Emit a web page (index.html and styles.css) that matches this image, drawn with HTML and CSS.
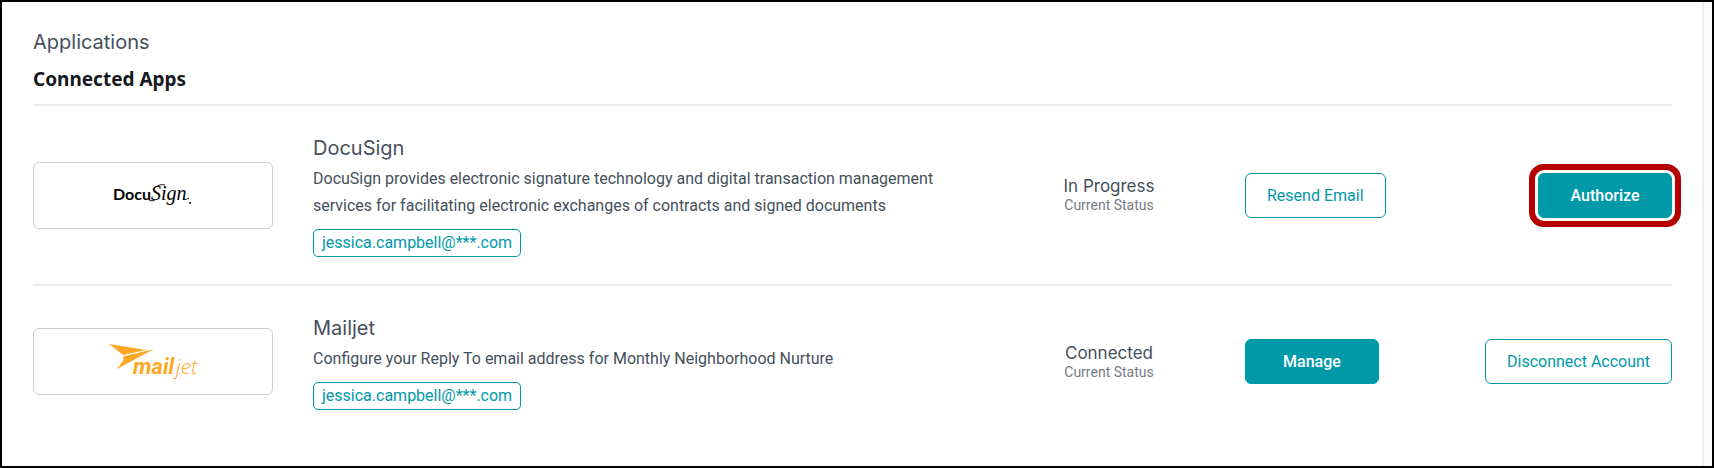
FILE: index.html
```html
<!DOCTYPE html>
<html lang="en">
<head>
	<title>Applications</title>
	<meta charset="UTF-8">
	<link rel="stylesheet" href="styles.css">
</head>
<body>
	<div id="page">
		<div id="apps">
			<h1>Applications</h1>
			<h2>Connected Apps</h2>
			<ul id="app-list">
				<li>
					<div class="logo">
						<svg width="80" height="30" viewBox="0 0 80 30">
							<text class="docu" x="0" y="20">Docu</text>
							<text class="sign" x="38" y="20">Sign</text>
							<path class="swash" d="M40 10c3-5 9-6 12-5"/>
							<path class="swash" d="M36 20c2 1 4 1 6 0M71 19c2 1 3 0 5-1"/>
							<circle cx="77" cy="23" r="1"/>
						</svg>
					</div>
					<div class="info">
						<h3>DocuSign</h3>
						<p>DocuSign provides electronic signature technology and digital transaction management services for facilitating electronic exchanges of contracts and signed documents</p>
						<span class="tag">jessica.campbell@***.com</span>
					</div>
					<div class="status">
						<strong>In Progress</strong>
						<small>Current Status</small>
					</div>
					<div class="action">
						<button type="button" class="btn">Resend Email</button>
					</div>
					<div class="action last">
						<button type="button" class="btn fill marked">Authorize</button>
					</div>
				</li>
				<li>
					<div class="logo">
						<svg width="94" height="40" viewBox="0 0 94 40">
							<g fill="#ffa724">
								<path d="M3 2L40 8L17 13Z"/>
								<path d="M17 14.5L48 7L11 27L17.5 18Z"/>
								<text class="mail" x="27" y="32">mail</text>
								<text class="jet" x="70" y="32">jet</text>
							</g>
						</svg>
					</div>
					<div class="info">
						<h3>Mailjet</h3>
						<p>Configure your Reply To email address for Monthly Neighborhood Nurture</p>
						<span class="tag">jessica.campbell@***.com</span>
					</div>
					<div class="status">
						<strong>Connected</strong>
						<small>Current Status</small>
					</div>
					<div class="action">
						<button type="button" class="btn fill">Manage</button>
					</div>
					<div class="action last">
						<button type="button" class="btn">Disconnect Account</button>
					</div>
				</li>
			</ul>
		</div>
	</div>
</body>
</html>
```
FILE: styles.css
```css
*{
	margin: 0;
	padding: 0;
	box-sizing: border-box;
}
ul{
	list-style: none;
}
body{
	font-family: Roboto, "Liberation Sans", sans-serif;
	font-size: 16px;
	color: #454f5b;
	background: #fff;
}
#page{
	min-height: 100vh;
	border: 2px solid #000;
	padding-right: 8px;
	background: #fafafa;
	display: flex;
}
#apps{
	flex: 1;
	padding: 23px 30px 24px 31px;
	background: #fff;
	border-right: 2px solid #eee;
}
h1, h3{
	font-family: Inter, "Liberation Sans", sans-serif;
	font-size: 20px;
	font-weight: 400;
	line-height: 34px;
}
h2{
	font-family: "Noto Sans", sans-serif;
	font-size: 19px;
	font-weight: 700;
	line-height: 41px;
	margin-bottom: 4px;
	color: #16191d;
}
#app-list{
	border-top: 2px solid #ececec;
}
#app-list li{
	display: grid;
	grid-template-columns: 240px 1fr 192px 200px 187px;
	gap: 40px;
	align-items: center;
	padding: 24px 0;
	border-bottom: 2px solid #ececec;
}
#app-list li:last-child{
	border-bottom: none;
}
.logo{
	height: 67px;
	border: 1px solid #c9ced3;
	border-radius: 6px;
	display: flex;
	align-items: center;
	justify-content: center;
}
.docu{
	font: 700 16px Lato, sans-serif;
}
.sign{
	font: italic 20px "Liberation Serif", serif;
}
.swash{
	fill: none;
	stroke: #111;
}
.mail{
	font: italic 700 22px Roboto, sans-serif;
}
.jet{
	font: italic 300 21px "Open Sans", sans-serif;
}
.info{
	padding: 1px 0 3px;
}
.info p{
	line-height: 27px;
	margin-bottom: 10px;
}
.tag{
	display: block;
	width: max-content;
	border: 1px solid #0099a8;
	border-radius: 5px;
	padding: 0 8px;
	line-height: 26px;
	color: #0099a8;
}
.status{
	text-align: center;
}
.status strong{
	display: block;
	font-family: Inter, "Liberation Sans", sans-serif;
	font-size: 17px;
	font-weight: 400;
	line-height: 20px;
}
.status small{
	display: block;
	font-size: 14px;
	line-height: 18px;
	color: #747c86;
}
.last{
	text-align: right;
}
.btn{
	min-width: 134px;
	height: 45px;
	padding: 0 21px;
	border: 1px solid #0099a8;
	border-radius: 6px;
	background: #fff;
	color: #0099a8;
	font: inherit;
	white-space: nowrap;
	cursor: pointer;
}
.fill{
	background: #0099a8;
	color: #fff;
	font-weight: 500;
}
/* red ring around the button */
.marked{
	box-shadow: 0 0 0 3px #fff, 0 0 0 9px #b60000;
}
```
